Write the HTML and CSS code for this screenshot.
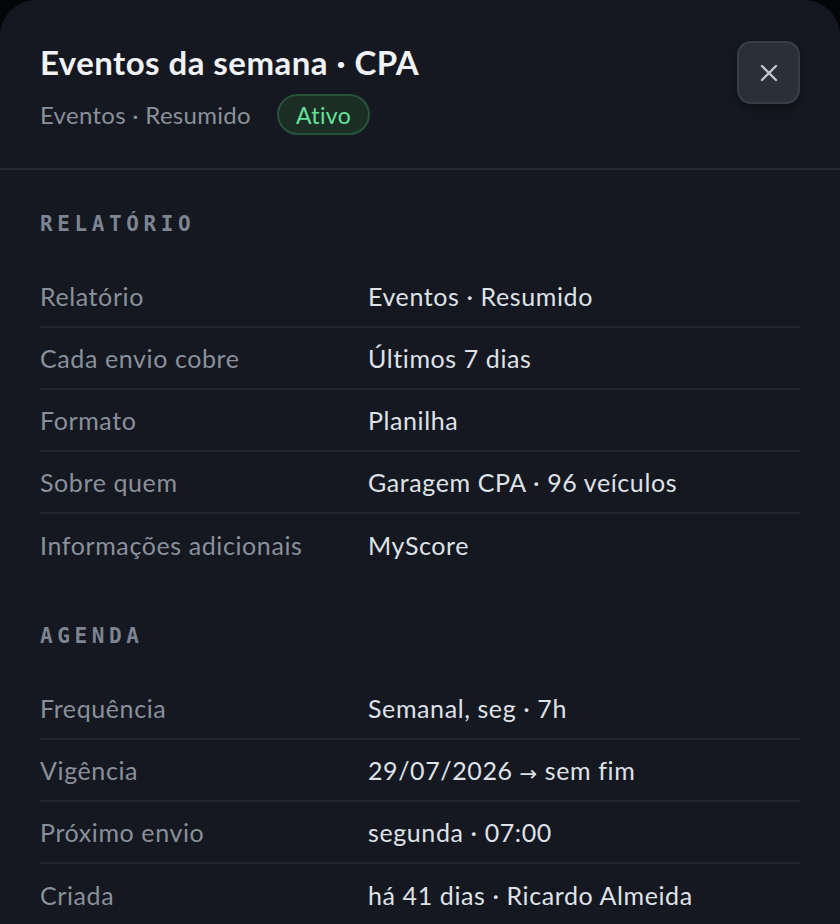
FILE: index.html
```
<!DOCTYPE html>
<html lang="pt-BR">
<head>
<meta charset="utf-8">
<title>Eventos da semana · CPA</title>
<link rel="stylesheet" href="styles.css">
</head>
<body>
<div class="panel">
  <header class="header">
    <div class="header-text">
      <h1 class="title">Eventos da semana · CPA</h1>
      <div class="subtitle-row">
        <span class="subtitle">Eventos · Resumido</span>
        <span class="badge">Ativo</span>
      </div>
    </div>
    <button class="close" aria-label="Fechar">
      <svg width="20" height="20" viewBox="0 0 20 20"><path d="M3 3 L17 17 M17 3 L3 17" stroke="currentColor" stroke-width="2.4" stroke-linecap="round" fill="none"/></svg>
    </button>
  </header>
  <main class="content">
    <section class="section">
      <h2 class="section-label">RELATÓRIO</h2>
      <dl class="rows">
        <div class="row"><dt>Relatório</dt><dd>Eventos · Resumido</dd></div>
        <div class="row"><dt>Cada envio cobre</dt><dd>Últimos 7 dias</dd></div>
        <div class="row"><dt>Formato</dt><dd>Planilha</dd></div>
        <div class="row"><dt>Sobre quem</dt><dd>Garagem CPA · 96 veículos</dd></div>
        <div class="row"><dt>Informações adicionais</dt><dd>MyScore</dd></div>
      </dl>
    </section>
    <section class="section">
      <h2 class="section-label">AGENDA</h2>
      <dl class="rows">
        <div class="row"><dt>Frequência</dt><dd>Semanal, seg · 7h</dd></div>
        <div class="row"><dt>Vigência</dt><dd>29/07/2026 <span class="arrow">→</span> sem fim</dd></div>
        <div class="row"><dt>Próximo envio</dt><dd>segunda · 07:00</dd></div>
        <div class="row"><dt>Criada</dt><dd>há 41 dias · Ricardo Almeida</dd></div>
      </dl>
    </section>
  </main>
</div>
</body>
</html>
```
FILE: styles.css
```
* { box-sizing: border-box; }
html, body { margin: 0; padding: 0; }
body {
  background: #050608;
  font-family: Lato, "Noto Sans", sans-serif;
  color: #dfe2e8;
  height: 924px;
  overflow: hidden;
}
.panel {
  background: #151820;
  border-radius: 36px 36px 0 0;
  min-height: 924px;
}
.header {
  display: flex;
  justify-content: space-between;
  align-items: flex-start;
  padding: 40px 40px 33px 40px;
  border-bottom: 2px solid #252932;
}
.title {
  margin: 0;
  font-size: 33px;
  line-height: 44px;
  font-weight: 700;
  color: #f1f2f6;
  letter-spacing: 0.45px;
}
.subtitle-row {
  display: flex;
  align-items: center;
  gap: 26px;
  margin-top: 10px;
}
.subtitle {
  font-size: 24px;
  letter-spacing: 0.3px;
  color: #8a909b;
}
.badge {
  display: inline-flex;
  align-items: center;
  height: 41px;
  padding: 0 17px;
  border-radius: 21px;
  background: #1b2d25;
  border: 2px solid #27533a;
  color: #63e39a;
  font-size: 23px;
  letter-spacing: 0.4px;
}
.close {
  width: 63px;
  height: 63px;
  margin-top: 1px;
  border-radius: 14px;
  background: #2a2f38;
  border: 2px solid #383e48;
  color: #c1c6cf;
  display: flex;
  align-items: center;
  justify-content: center;
  padding: 0;
  box-shadow: 0 4px 10px rgba(0,0,0,0.35);
}
.content {
  padding: 40px 40px 0 40px;
}
.section + .section {
  margin-top: 46px;
}
.section-label {
  margin: 0 0 28px 0;
  font-family: "DejaVu Sans Mono", monospace;
  font-weight: 700;
  font-size: 21px;
  line-height: 28px;
  letter-spacing: 4.6px;
  color: #7d8492;
}
.rows { margin: 0; }
.row {
  display: grid;
  grid-template-columns: 328px 1fr;
  height: 62px;
  align-items: center;
  border-bottom: 2px solid #22262e;
  font-size: 25px;
  letter-spacing: 0.6px;
}
.row:last-child { border-bottom: none; }
.row dt { color: #8a909b; }
.row dd { margin: 0; color: #dfe2e8; }
.arrow {
  font-family: "DejaVu Sans", sans-serif;
  font-size: 21px;
  position: relative;
  top: 1px;
}
```
